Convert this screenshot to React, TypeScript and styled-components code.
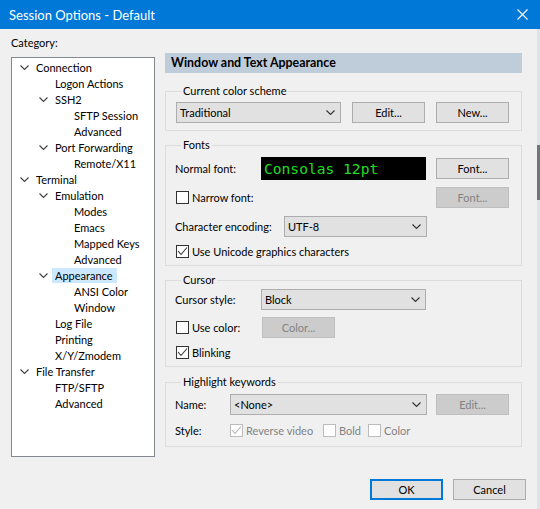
import React from "react";
import styled, { createGlobalStyle } from "styled-components";

const Global = createGlobalStyle`
  html, body { margin: 0; padding: 0; background: #f0f0f0; }
  body {
    width: 540px; height: 509px; overflow: hidden;
    font-family: "Segoe UI", Lato, "Noto Sans", sans-serif;
    font-size: 11px; color: #000;
  }
  * { box-sizing: border-box; }
`;

const Screen = styled.div`
  display: flex;
  width: 540px;
  height: 509px;
`;

const Win = styled.div`
  width: 537px;
  height: 509px;
  display: flex;
  flex-direction: column;
  background: #f0f0f0;
`;

const Edge = styled.div`
  width: 3px;
  height: 509px;
  background: linear-gradient(
    to bottom,
    #0078d7 0 29px,
    #dfe3e8 29px 145px,
    #70757a 145px 200px,
    #dfe3e8 200px
  );
`;

const TitleBar = styled.div`
  height: 29px;
  flex: none;
  display: flex;
  align-items: center;
  background: #0078d7;
  color: #fff;
  padding-left: 9px;
  font-size: 13px;
`;

const CloseBtn = styled.div`
  margin-left: auto;
  width: 30px;
  height: 29px;
  display: flex;
  align-items: center;
  justify-content: center;
`;

const Body = styled.div`
  flex: 1;
  display: flex;
  flex-direction: column;
  padding: 7px 11px 9px 11px;
`;

const Main = styled.div`
  display: flex;
  gap: 10px;
  align-items: flex-start;
`;

const LeftCol = styled.div`
  width: 144px;
  display: flex;
  flex-direction: column;
`;

const CategoryLabel = styled.div`
  height: 14px;
  line-height: 14px;
  margin-bottom: 7px;
`;

const Tree = styled.div`
  height: 400px;
  border: 1px solid #828790;
  background: #fff;
  padding-top: 1px;
  display: flex;
  flex-direction: column;
`;

const TreeRow = styled.div<{ $level: number }>`
  height: 16px;
  display: flex;
  align-items: center;
  padding-left: ${(p) => 8 + p.$level * 19}px;
`;

const Expander = styled.span`
  width: 13px;
  height: 16px;
  flex: none;
  display: flex;
  align-items: center;
`;

const TreeLabel = styled.span<{ $selected?: boolean }>`
  height: 15px;
  line-height: 15px;
  padding: 0 4px 0 3px;
  white-space: nowrap;
  background: ${(p) => (p.$selected ? "#cce8ff" : "transparent")};
`;

const RightCol = styled.div`
  width: 357px;
  margin-top: 17px;
  display: flex;
  flex-direction: column;
`;

const Header = styled.div`
  height: 20px;
  line-height: 20px;
  background: #bfcddb;
  font-weight: bold;
  font-size: 12.4px;
  padding-left: 6px;
`;

const Group = styled.fieldset<{ $top: number; $bottom: number }>`
  margin: ${(p) => p.$top}px 0 0 0;
  border: 1px solid #dcdcdc;
  padding: 0 12px ${(p) => p.$bottom}px 9px;
  min-width: 0;
`;

const Legend = styled.legend`
  margin-left: 6px;
  padding: 0 2px;
  line-height: 14px;
  height: 14px;
`;

const Row = styled.div<{ $top: number; $h: number }>`
  margin-top: ${(p) => p.$top}px;
  height: ${(p) => p.$h}px;
  display: flex;
  align-items: center;
`;

const Label = styled.span<{ $w?: number }>`
  width: ${(p) => (p.$w ? `${p.$w}px` : "auto")};
  flex: none;
  white-space: nowrap;
`;

const Combo = styled.div<{ $w: number; $ml?: number }>`
  width: ${(p) => p.$w}px;
  height: 21px;
  margin-left: ${(p) => p.$ml ?? 0}px;
  flex: none;
  border: 1px solid #adadad;
  background: #e1e1e1;
  display: flex;
  align-items: center;
  padding: 0 5px 0 3px;
  justify-content: space-between;
`;

const Button = styled.div<{ $disabled?: boolean; $default?: boolean; $ml?: number }>`
  width: 73px;
  height: 21px;
  flex: none;
  margin-left: ${(p) => (p.$ml === undefined ? "auto" : `${p.$ml}px`)};
  display: flex;
  align-items: center;
  justify-content: center;
  background: ${(p) => (p.$disabled ? "#cccccc" : "#e1e1e1")};
  border: ${(p) =>
    p.$default ? "2px solid #0078d7" : p.$disabled ? "1px solid #bfbfbf" : "1px solid #adadad"};
  color: ${(p) => (p.$disabled ? "#838383" : "#000")};
`;

const FontPreview = styled.div`
  width: 165px;
  height: 23px;
  flex: none;
  background: #000;
  color: #22dd22;
  font-family: "DejaVu Sans Mono", "Liberation Mono", monospace;
  font-size: 14.6px;
  display: flex;
  align-items: center;
  padding-left: 3px;
`;

const CheckWrap = styled.label<{ $disabled?: boolean; $ml?: number; $w?: number }>`
  display: flex;
  align-items: center;
  flex: none;
  width: ${(p) => (p.$w ? `${p.$w}px` : "auto")};
  margin-left: ${(p) => p.$ml ?? 1}px;
  color: ${(p) => (p.$disabled ? "#838383" : "#000")};
  white-space: nowrap;
`;

const Box = styled.span<{ $disabled?: boolean }>`
  width: 13px;
  height: 13px;
  flex: none;
  margin-right: 3px;
  border: 1px solid ${(p) => (p.$disabled ? "#bcbcbc" : "#333333")};
  background: #fff;
  display: flex;
  align-items: center;
  justify-content: center;
`;

const ButtonRow = styled.div`
  margin-top: auto;
  display: flex;
  justify-content: flex-end;
  gap: 10px;
`;

const Chevron = ({ color = "#333" }: { color?: string }) => (
  <svg width="9" height="5" viewBox="0 0 9 5">
    <polyline points="0.5,0.5 4.5,4.5 8.5,0.5" fill="none" stroke={color} strokeWidth="1.1" />
  </svg>
);

const Check = ({ color }: { color: string }) => (
  <svg width="11" height="11" viewBox="0 0 11 11">
    <polyline points="1,5 4,8.5 10,1.5" fill="none" stroke={color} strokeWidth="1.1" />
  </svg>
);

const Checkbox = ({
  label,
  checked,
  disabled,
  ml,
  w,
}: {
  label: string;
  checked?: boolean;
  disabled?: boolean;
  ml?: number;
  w?: number;
}) => (
  <CheckWrap $disabled={disabled} $ml={ml} $w={w}>
    <Box $disabled={disabled}>{checked && <Check color={disabled ? "#b0b0b0" : "#333"} />}</Box>
    {label}
  </CheckWrap>
);

type Node = { label: string; level: number; exp?: boolean; sel?: boolean };

const tree: Node[] = [
  { label: "Connection", level: 0, exp: true },
  { label: "Logon Actions", level: 1 },
  { label: "SSH2", level: 1, exp: true },
  { label: "SFTP Session", level: 2 },
  { label: "Advanced", level: 2 },
  { label: "Port Forwarding", level: 1, exp: true },
  { label: "Remote/X11", level: 2 },
  { label: "Terminal", level: 0, exp: true },
  { label: "Emulation", level: 1, exp: true },
  { label: "Modes", level: 2 },
  { label: "Emacs", level: 2 },
  { label: "Mapped Keys", level: 2 },
  { label: "Advanced", level: 2 },
  { label: "Appearance", level: 1, exp: true, sel: true },
  { label: "ANSI Color", level: 2 },
  { label: "Window", level: 2 },
  { label: "Log File", level: 1 },
  { label: "Printing", level: 1 },
  { label: "X/Y/Zmodem", level: 1 },
  { label: "File Transfer", level: 0, exp: true },
  { label: "FTP/SFTP", level: 1 },
  { label: "Advanced", level: 1 },
];

export default function App() {
  return (
    <Screen>
      <Global />
      <Win>
        <TitleBar>
          Session Options - Default
          <CloseBtn>
            <svg width="11" height="11" viewBox="0 0 11 11">
              <path d="M0.5 0.5 L10.5 10.5 M10.5 0.5 L0.5 10.5" stroke="#fff" strokeWidth="1.1" />
            </svg>
          </CloseBtn>
        </TitleBar>
        <Body>
          <Main>
            <LeftCol>
              <CategoryLabel>Category:</CategoryLabel>
              <Tree>
                {tree.map((n, i) => (
                  <TreeRow key={i} $level={n.level}>
                    <Expander>{n.exp && <Chevron color="#404040" />}</Expander>
                    <TreeLabel $selected={n.sel}>{n.label}</TreeLabel>
                  </TreeRow>
                ))}
              </Tree>
            </LeftCol>
            <RightCol>
              <Header>Window and Text Appearance</Header>

              <Group $top={11} $bottom={7}>
                <Legend>Current color scheme</Legend>
                <Row $top={4} $h={21}>
                  <Combo $w={165} $ml={1}>
                    Traditional
                    <Chevron />
                  </Combo>
                  <Button $ml={11}>Edit...</Button>
                  <Button>New...</Button>
                </Row>
              </Group>

              <Group $top={7} $bottom={7}>
                <Legend>Fonts</Legend>
                <Row $top={5} $h={23}>
                  <Label $w={86}>Normal font:</Label>
                  <FontPreview>Consolas 12pt</FontPreview>
                  <Button>Font...</Button>
                </Row>
                <Row $top={7} $h={21}>
                  <Checkbox label="Narrow font:" />
                  <Button $disabled>Font...</Button>
                </Row>
                <Row $top={8} $h={21}>
                  <Label $w={109}>Character encoding:</Label>
                  <Combo $w={143}>
                    UTF-8
                    <Chevron />
                  </Combo>
                </Row>
                <Row $top={7} $h={14}>
                  <Checkbox label="Use Unicode graphics characters" checked />
                </Row>
              </Group>

              <Group $top={7} $bottom={7}>
                <Legend>Cursor</Legend>
                <Row $top={2} $h={21}>
                  <Label $w={86}>Cursor style:</Label>
                  <Combo $w={165}>
                    Block
                    <Chevron />
                  </Combo>
                </Row>
                <Row $top={7} $h={21}>
                  <Checkbox label="Use color:" w={86} />
                  <Button $disabled $ml={0}>
                    Color...
                  </Button>
                </Row>
                <Row $top={7} $h={14}>
                  <Checkbox label="Blinking" checked />
                </Row>
              </Group>

              <Group $top={8} $bottom={9}>
                <Legend>Highlight keywords</Legend>
                <Row $top={5} $h={21}>
                  <Label $w={55}>Name:</Label>
                  <Combo $w={197}>
                    &lt;None&gt;
                    <Chevron />
                  </Combo>
                  <Button $disabled>Edit...</Button>
                </Row>
                <Row $top={8} $h={14}>
                  <Label $w={55}>Style:</Label>
                  <Checkbox label="Reverse video" checked disabled ml={0} w={93} />
                  <Checkbox label="Bold" disabled ml={0} w={45} />
                  <Checkbox label="Color" disabled ml={0} />
                </Row>
              </Group>
            </RightCol>
          </Main>
          <ButtonRow>
            <Button $default $ml={0}>OK</Button>
            <Button $ml={0}>Cancel</Button>
          </ButtonRow>
        </Body>
      </Win>
      <Edge />
    </Screen>
  );
}
